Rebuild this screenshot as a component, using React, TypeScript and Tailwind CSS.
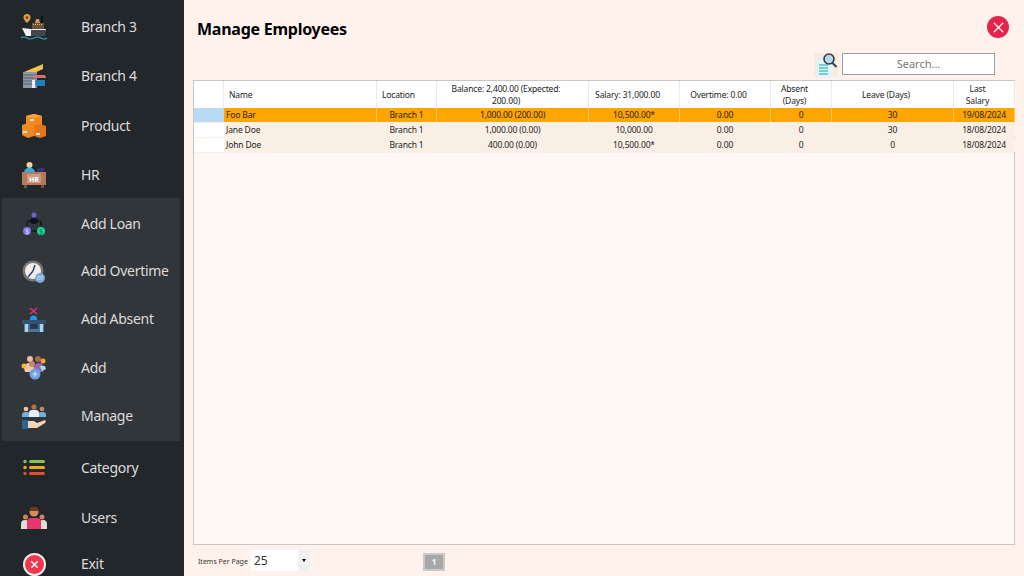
import { X } from 'lucide-react';

const IconBranch3 = () => (
  <svg width="26" height="26" viewBox="0 0 26 26">
    <path d="M6 0a3.500 3.500 0 0 1 3.500 3.500C9.500 6 6 9 6 9S2.500 6 2.500 3.500A3.500 3.500 0 0 1 6 0z" fill="#d9a441" />
    <circle cx="6" cy="3.500" r="1.500" fill="#a8323a" />
    <rect x="20" y="2" width="2" height="9" fill="#111" />
    <path d="M15 5h3l1 4h-5z" fill="#c79a5b" />
    <path d="M11 9h12v6H11z" fill="#6f5236" />
    <path d="M12 10.500h10" stroke="#d8c49c" strokeWidth="1" strokeDasharray="1 1" />
    <path d="M1 14l9 1h15l-2 7H5z" fill="#f0f0ee" />
    <path d="M10 16h15l-2 6H10z" fill="#43474d" />
    <path d="M0 24q3-2 6 0t7 0 7 0 6 0" stroke="#38a9b8" strokeWidth="1.200" fill="none" />
  </svg>
);
const IconBranch4 = () => (
  <svg width="26" height="26" viewBox="0 0 26 26">
    <path d="M3 9l19-8v5L9 12z" fill="#f2c04a" />
    <rect x="2" y="9" width="14" height="16" fill="#8c99a6" />
    <path d="M2 12h14M2 15h14M2 18h14M2 21h14" stroke="#55606b" strokeWidth="1" />
    <rect x="11" y="17" width="3" height="8" fill="#eef" />
    <path d="M13 12h11l1 3H12z" fill="#d96c7c" />
    <rect x="15" y="17" width="9" height="6" fill="#1c7fc0" />
  </svg>
);
const IconProduct = () => (
  <svg width="26" height="26" viewBox="0 0 26 26">
    <path d="M5 3l8-2 8 2v9l-8 2-8-2z" fill="#f08a1d" />
    <path d="M5 3l8-2 8 2-8 2z" fill="#f7a845" />
    <path d="M1 12l6-2 6 3v10l-6 2-6-3z" fill="#ee8a20" />
    <path d="M13 13l6-2 6 2v10l-6 2-6-2z" fill="#e5761a" />
    <rect x="2" y="18" width="4" height="2" fill="#f6e3cf" />
    <rect x="9" y="6" width="4" height="2" fill="#f6e3cf" />
    <rect x="15" y="20" width="4" height="2" fill="#f6e3cf" />
  </svg>
);
const IconHR = () => (
  <svg width="26" height="26" viewBox="0 0 26 26">
    <circle cx="8.500" cy="3" r="3" fill="#f5cfa8" />
    <path d="M3 11a5.500 5.500 0 0 1 11 0z" fill="#27b6df" />
    <path d="M17 6h7l-2 5h-7z" fill="#34346e" />
    <rect x="1" y="10" width="24" height="13" fill="#b5785a" />
    <rect x="3" y="23" width="3" height="3" fill="#7b4f3c" />
    <rect x="20" y="23" width="3" height="3" fill="#7b4f3c" />
    <rect x="6" y="12" width="14" height="9" fill="#c99a84" />
    <text x="13" y="19.500" textAnchor="middle" fontSize="7" fontWeight="700" fill="#fff" fontFamily="Noto Sans, sans-serif">HR</text>
  </svg>
);
const IconLoan = () => (
  <svg width="24" height="24" viewBox="0 0 24 24">
    <path d="M5 14v-3a2 2 0 0 1 2-2h10a2 2 0 0 1 2 2v3M9 19h6" stroke="#15181f" strokeWidth="1.500" fill="none" />
    <circle cx="12" cy="3" r="2.500" fill="#6a62d8" />
    <ellipse cx="12" cy="9" rx="4" ry="3" fill="#10131a" />
    <circle cx="5" cy="19" r="4" fill="#7f74e6" />
    <circle cx="19" cy="19" r="4" fill="#14d88f" />
    <text x="5" y="21.500" textAnchor="middle" fontSize="6.500" fill="#e8e6ff" fontFamily="Noto Sans, sans-serif">$</text>
    <text x="19" y="21.500" textAnchor="middle" fontSize="6.500" fill="#0a6b47" fontFamily="Noto Sans, sans-serif">$</text>
  </svg>
);
const IconOvertime = () => (
  <svg width="24" height="24" viewBox="0 0 24 24">
    <circle cx="11" cy="11" r="10.500" fill="#77777a" />
    <circle cx="11" cy="11" r="8" fill="#f3efe7" />
    <path d="M11 11l2-6M11 11l-5 6" stroke="#2a3f8f" strokeWidth="1.500" />
    <circle cx="18" cy="18" r="5" fill="#7ea9d8" />
    <text x="18" y="20" textAnchor="middle" fontSize="5" fill="#e8f0fb" fontFamily="Noto Sans, sans-serif">OT</text>
  </svg>
);
const IconAbsent = () => (
  <svg width="26" height="26" viewBox="0 0 26 26">
    <path d="M9 1l7 6M16 1L9 7" stroke="#e0336f" strokeWidth="1.600" />
    <path d="M9 14v-2a3.500 3.500 0 0 1 7 0v2z" fill="#1c9be6" />
    <rect x="1" y="13" width="24" height="4" fill="#35516b" />
    <rect x="3" y="17" width="20" height="8" fill="#4d7596" />
    <rect x="4" y="17" width="3" height="8" fill="#a8d4ee" />
    <rect x="19" y="17" width="3" height="8" fill="#a8d4ee" />
    <rect x="9" y="17" width="8" height="5" fill="#233b52" />
  </svg>
);
const IconAdd = () => (
  <svg width="26" height="26" viewBox="0 0 26 26">
    <path d="M3 13a5 5 0 0 1 10 0l-1 4H4z" fill="#f3c7a9" />
    <path d="M13 13a5 5 0 0 1 10 0l-1 4h-8z" fill="#9a6bb0" />
    <circle cx="9" cy="4" r="3" fill="#f6b9a3" />
    <circle cx="17" cy="4" r="3" fill="#a66a4e" />
    <circle cx="3" cy="11" r="2.500" fill="#f7b733" />
    <circle cx="22" cy="6" r="2.500" fill="#f4a63a" />
    <path d="M19 11h5l1 3-4 2z" fill="#a8dbe8" />
    <circle cx="11" cy="9" r="3" fill="#c68763" />
    <circle cx="14" cy="19" r="5.500" fill="#6ea3e8" />
    <path d="M14 16.500v5M11.500 19h5" stroke="#e8f0fb" strokeWidth="1" />
  </svg>
);
const IconManage = () => (
  <svg width="26" height="26" viewBox="0 0 26 26">
    <circle cx="5" cy="5" r="2.300" fill="#f1c3a4" />
    <circle cx="13" cy="3" r="2.600" fill="#b5714f" />
    <circle cx="21" cy="5" r="2.300" fill="#c98663" />
    <path d="M1 13v-2a3 3 0 0 1 3-3h2a3 3 0 0 1 3 3v2zM17 13v-2a3 3 0 0 1 3-3h2a3 3 0 0 1 3 3v2z" fill="#6cb0e4" />
    <path d="M8 13v-4a3 3 0 0 1 3-3h4a3 3 0 0 1 3 3v4z" fill="#e8eef3" />
    <rect x="1" y="16" width="6" height="9" fill="#2e6496" />
    <path d="M7 17h6l3 2 8-3c1 1 1 2 0 3l-8 5H7z" fill="#f8d3b8" />
  </svg>
);
const IconCategory = () => (
  <svg width="22" height="18" viewBox="0 0 22 18">
    <circle cx="2" cy="2.500" r="1.700" fill="#8bc34a" />
    <rect x="6" y="1" width="16" height="3" rx="1.500" fill="#8bc34a" />
    <circle cx="2" cy="8.500" r="1.700" fill="#f5a81c" />
    <rect x="6" y="7" width="16" height="3" rx="1.500" fill="#f5a81c" />
    <circle cx="2" cy="14.500" r="1.700" fill="#e74c2e" />
    <rect x="6" y="13" width="16" height="3" rx="1.500" fill="#e74c2e" />
  </svg>
);
const IconUsers = () => (
  <svg width="26" height="22" viewBox="0 0 26 22">
    <circle cx="4.500" cy="10" r="2.500" fill="#c98663" />
    <circle cx="21" cy="10" r="2.500" fill="#c98663" />
    <path d="M0 22v-5a4 4 0 0 1 8 0v5zM18 22v-5a4 4 0 0 1 8 0v5z" fill="#e2dcd8" />
    <circle cx="13" cy="5" r="4.500" fill="#d88b55" />
    <path d="M8.500 4a4.500 4.500 0 0 1 9 0z" fill="#6b3b24" />
    <path d="M6 22v-7a4 4 0 0 1 4-4h6a4 4 0 0 1 4 4v7z" fill="#e5386d" />
  </svg>
);
const IconExit = () => (
  <div className="w-[23px] h-[23px] rounded-full bg-[#f1374f] border-2 border-[#f3eeee] flex items-center justify-center">
    <X size={11} color="#fff" strokeWidth={3} />
  </div>
);

type NavItem = { label: string; icon: React.ReactNode; h: string };

const topItems: NavItem[] = [
  { label: 'Branch 3', icon: <IconBranch3 />, h: 'h-[48px]' },
  { label: 'Branch 4', icon: <IconBranch4 />, h: 'h-[50px]' },
  { label: 'Product', icon: <IconProduct />, h: 'h-[50px]' },
  { label: 'HR', icon: <IconHR />, h: 'h-[48px]' },
];
const subItems: NavItem[] = [
  { label: 'Add Loan', icon: <IconLoan />, h: 'h-[48px]' },
  { label: 'Add Overtime', icon: <IconOvertime />, h: 'h-[47px]' },
  { label: 'Add Absent', icon: <IconAbsent />, h: 'h-[49px]' },
  { label: 'Add', icon: <IconAdd />, h: 'h-[48px]' },
  { label: 'Manage', icon: <IconManage />, h: 'h-[49px]' },
];
const bottomItems: NavItem[] = [
  { label: 'Category', icon: <IconCategory />, h: 'h-[54px]' },
  { label: 'Users', icon: <IconUsers />, h: 'h-[46px]' },
  { label: 'Exit', icon: <IconExit />, h: 'h-[46px]' },
];

const columns = 'grid grid-cols-[30px_153px_60px_152px_91px_91px_61px_122px_61px]';

const headers = [
  '',
  'Name',
  'Location',
  'Balance: 2,400.00 (Expected:\n200.00)',
  'Salary: 31,000.00',
  'Overtime: 0.00',
  'Absent\n(Days)',
  'Leave (Days)',
  'Last\nSalary',
];

const rows = [
  ['Foo Bar', 'Branch 1', '1,000.00 (200.00)', '10,500.00*', '0.00', '0', '30', '19/08/2024'],
  ['Jane Doe', 'Branch 1', '1,000.00 (0.00)', '10,000.00', '0.00', '0', '30', '18/08/2024'],
  ['John Doe', 'Branch 1', '400.00 (0.00)', '10,500.00*', '0.00', '0', '0', '18/08/2024'],
];

function Nav({ item, indent }: { item: NavItem; indent?: boolean }) {
  return (
    <div className={`flex items-center ${item.h} ${indent ? 'pl-[19px]' : 'pl-[21px]'}`}>
      <div className="w-[26px] flex justify-center shrink-0">{item.icon}</div>
      <span className="ml-[34px] pb-[2px] text-[14px] tracking-[-0.3px] text-[#dcdcdc] whitespace-nowrap">{item.label}</span>
    </div>
  );
}

export default function App() {
  return (
    <div className="flex w-[1024px] h-[576px] overflow-hidden bg-[#fff2ec] text-black font-['Noto_Sans',sans-serif]">
      <aside className="w-[184px] shrink-0 bg-[#22272b] pt-[3px] overflow-hidden">
        {topItems.map((item) => (
          <Nav key={item.label} item={item} />
        ))}
        <div className="ml-[2px] w-[178px] bg-[#31363b] -mt-[1px] pt-[2px]">
          {subItems.map((item) => (
            <Nav key={item.label} item={item} indent />
          ))}
        </div>
        {bottomItems.map((item) => (
          <Nav key={item.label} item={item} />
        ))}
      </aside>

      <main className="flex-1 flex flex-col pl-[9px] pr-[9px] min-w-0">
        <div className="h-[53px] flex items-center justify-between pl-[4px] pr-[6px] pt-[5px]">
          <h1 className="text-[16px] font-bold tracking-[-0.25px] leading-none">Manage Employees</h1>
          <div className="w-[22px] h-[22px] -mt-[4px] rounded-full bg-[#e3244b] flex items-center justify-center">
            <X size={17} color="#fff" strokeWidth={1.75} />
          </div>
        </div>

        <div className="h-[27px] flex items-start justify-end gap-[4px] pr-[20px]">
          <svg width="24" height="24" viewBox="0 0 24 24" className="bg-[#fbeadb]">
            <path d="M2 6h13l4 4v14H2z" fill="#e3f3f8" />
            <path d="M5 12h9M5 15h9M5 18h9M5 21h9" stroke="#4cc3c9" strokeWidth="1.300" />
            <circle cx="15" cy="6" r="5" fill="#b9d7ea" stroke="#2f3b4a" strokeWidth="1.600" />
            <path d="M18.500 10l4 4" stroke="#2f3b4a" strokeWidth="2" />
          </svg>
          <div className="w-[153px] h-[22px] bg-white border border-[#9e9e9e] flex items-center justify-center text-[11px] text-[#777]">
            Search...
          </div>
        </div>

        <div className="w-[822px] h-[465px] border border-[#c9c6c3] bg-[#fff8f4]">
          <div className={`${columns} h-[27px] bg-white text-[8.500px] tracking-[-0.15px] leading-[12px] text-[#222]`}>
            {headers.map((h, i) => (
              <div
                key={i}
                className={`flex items-center border-r border-[#ebebeb] whitespace-pre-line ${i === 1 || i === 2 ? 'justify-start pl-[5px]' : 'justify-center text-center pr-[13px]'}`}
              >
                {h}
              </div>
            ))}
          </div>
          {rows.map((row, r) => (
            <div key={r} className={`${columns} h-[15px] text-[8.500px] tracking-[-0.15px] leading-none text-[#222] border-b border-[#f7f0ea]`}>
              <div className={r === 0 ? 'bg-[#b8daf3]' : 'bg-white'} />
              {row.map((cell, c) => (
                <div
                  key={c}
                  className={`flex items-center pt-[1px] border-r ${r === 0 ? 'bg-[#ffa500] border-[#ffc766]' : 'bg-[#faefe5] border-[#faefe5]'} ${c === 0 ? 'justify-start pl-[2px]' : 'justify-center'}`}
                >
                  {cell}
                </div>
              ))}
            </div>
          ))}
        </div>

        <div className="flex items-center h-[31px] pl-[5px]">
          <span className="pt-[3px] text-[7px] text-[#333] w-[53px] whitespace-nowrap">Items Per Page</span>
          <div className="w-[59px] h-[21px] bg-white flex items-center justify-between">
            <span className="text-[12px] text-[#333] pl-[3px]">25</span>
            <div className="w-[12px] h-full bg-[#f0f0f0] flex items-center justify-center">
              <div className="border-x-[2px] border-t-[3px] border-x-transparent border-t-black" />
            </div>
          </div>
          <div className="ml-[113px] mt-[2px] w-[22px] h-[18px] bg-[#a8a8a8] border-2 border-[#c9c9c9] flex items-center justify-center text-[8px] font-bold text-white">
            1
          </div>
        </div>
      </main>
    </div>
  );
}
